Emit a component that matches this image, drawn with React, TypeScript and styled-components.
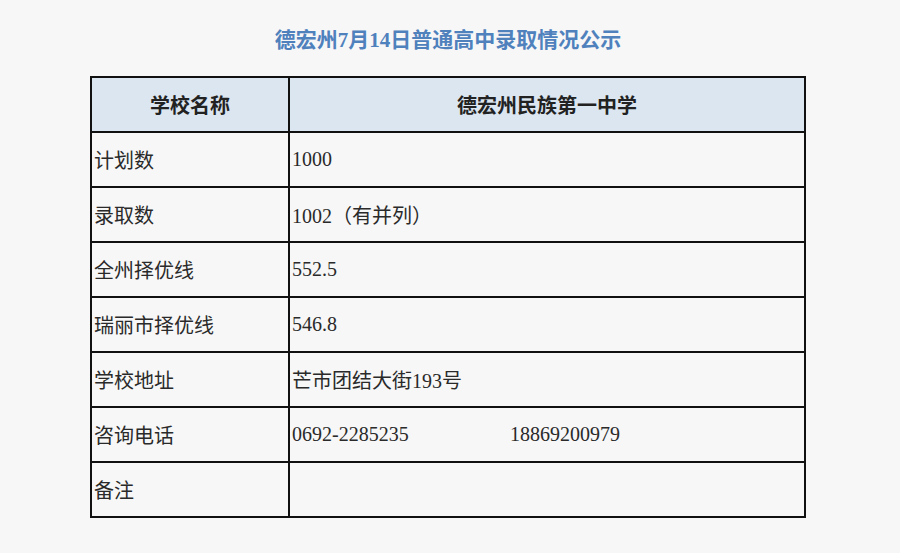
import React from "react";
import styled, { createGlobalStyle } from "styled-components";

const GlobalStyle = createGlobalStyle`
  html, body {
    margin: 0;
    padding: 0;
    background: #f7f7f7;
  }
  body {
    font-family: "Liberation Serif", "Noto Sans CJK SC", serif;
    color: #222;
  }
`;

const Page = styled.div`
  width: 900px;
  height: 553px;
  overflow: hidden;
`;

const Title = styled.h1`
  margin: 0;
  padding-top: 28px;
  height: 48px;
  line-height: 24px;
  font-size: 21px;
  font-weight: bold;
  color: #4f81bd;
  text-align: center;
  padding-right: 4px;
`;

const Table = styled.table`
  margin-left: 90px;
  width: 716px;
  border-collapse: collapse;
  table-layout: fixed;
  border: 2px solid #111;
`;

const Row = styled.tr`
  height: 55px;
`;

const HeadCell = styled.th`
  border: 2px solid #111;
  background: #dce6f1;
  font-size: 20px;
  font-weight: bold;
  text-align: center;
  padding: 0;
  color: #222;
`;

const Cell = styled.td`
  border: 2px solid #111;
  font-size: 20px;
  padding: 0 2px;
  vertical-align: middle;
  white-space: nowrap;
  color: #2a2a2a;
`;

const Phone = styled.span<{ $w?: number }>`
  display: inline-block;
  width: ${(p) => (p.$w ? `${p.$w}px` : "auto")};
`;

const rows: [string, React.ReactNode][] = [
  ["计划数", "1000"],
  ["录取数", "1002（有并列）"],
  ["全州择优线", "552.5"],
  ["瑞丽市择优线", "546.8"],
  ["学校地址", "芒市团结大街193号"],
  [
    "咨询电话",
    <>
      <Phone $w={218}>0692-2285235</Phone>
      <Phone>18869200979</Phone>
    </>,
  ],
  ["备注", ""],
];

export default function App() {
  return (
    <Page>
      <GlobalStyle />
      <Title>德宏州7月14日普通高中录取情况公示</Title>
      <Table>
        <colgroup>
          <col style={{ width: 198 }} />
          <col />
        </colgroup>
        <thead>
          <Row>
            <HeadCell>学校名称</HeadCell>
            <HeadCell>德宏州民族第一中学</HeadCell>
          </Row>
        </thead>
        <tbody>
          {rows.map(([label, value]) => (
            <Row key={label}>
              <Cell>{label}</Cell>
              <Cell>{value}</Cell>
            </Row>
          ))}
        </tbody>
      </Table>
    </Page>
  );
}
